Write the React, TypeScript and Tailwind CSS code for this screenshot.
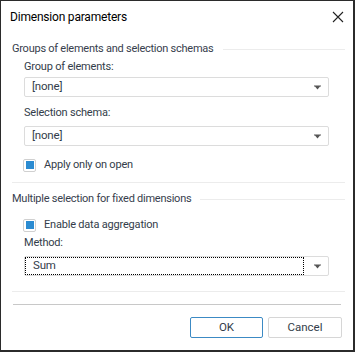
import React from 'react';

const font = { fontFamily: 'Roboto, "Noto Sans", sans-serif' };

function Arrow() {
    return (
        <svg width="7" height="5" viewBox="0 0 7 5" className="shrink-0">
            <path d="M0 0.5h7v1H0z M1 1.5h5L3.5 4.5z" fill="#555" />
        </svg>
    );
}

function Combo({ value, focused }: { value: string; focused?: boolean }) {
    return (
        <div className="ml-[23px] mr-[24px] h-[20px] border border-[#dcdcdc] rounded-[2px] bg-white flex items-center pr-[7px]">
            <div
                className={
                    'flex-1 h-full flex items-center pl-[7px] ' +
                    (focused ? 'border border-dotted border-black mr-[10px]' : 'mr-[10px]')
                }
            >
                <span className="text-[11.5px] tracking-[-0.2px] text-[#333d4a] leading-none">{value}</span>
            </div>
            <Arrow />
        </div>
    );
}

function Check({ label }: { label: string }) {
    return (
        <div className="h-[16px] flex items-center ml-[22px]">
            <div className="w-[13px] h-[13px] border border-[#d0d0d0] rounded-[2px] bg-white flex items-center justify-center">
                <div className="w-[8px] h-[8px] bg-[#2b8bd1]" />
            </div>
            <span className="ml-[8px] text-[11px] tracking-[-0.2px] text-[#333d4a]">{label}</span>
        </div>
    );
}

function SectionHeader({ title }: { title: string }) {
    return (
        <div className="h-[16px] flex items-center pl-[11px] pr-[8px]">
            <span className="text-[11px] tracking-[-0.25px] text-[#37404d] whitespace-nowrap">{title}</span>
            <div className="flex-1 h-px bg-[#ececec] ml-[9px]" />
        </div>
    );
}

function Label({ text }: { text: string }) {
    return (
        <div className="h-[16px] flex items-center ml-[23px]">
            <span className="text-[11px] tracking-[-0.2px] text-[#333d4a]">{text}</span>
        </div>
    );
}

export default function App() {
    return (
        <div
            style={font}
            className="w-[355px] h-[352px] bg-white border-l border-t border-r-2 border-b-2 border-[#2b2b2b] flex flex-col"
        >
            <div className="h-[31px] flex items-center justify-between pl-[9px] pr-[9px]">
                <span className="text-[12px] tracking-[-0.2px] text-black">Dimension parameters</span>
                <svg width="12" height="12" viewBox="0 0 12 12">
                    <path d="M1 1L11 11M11 1L1 11" stroke="#222" strokeWidth="1.1" />
                </svg>
            </div>

            <div className="mt-[9px]">
                <SectionHeader title="Groups of elements and selection schemas" />
            </div>
            <div className="mt-[2px]">
                <Label text="Group of elements:" />
            </div>
            <div className="mt-[2px]">
                <Combo value="[none]" />
            </div>
            <div className="mt-[8px]">
                <Label text="Selection schema:" />
            </div>
            <div className="mt-[5px]">
                <Combo value="[none]" />
            </div>
            <div className="mt-[11px]">
                <Check label="Apply only on open" />
            </div>
            <div className="mt-[9px] ml-[11px] mr-[8px] h-px bg-[#ececec]" />

            <div className="mt-[8px]">
                <SectionHeader title="Multiple selection for fixed dimensions" />
            </div>
            <div className="mt-[10px]">
                <Check label="Enable data aggregation" />
            </div>
            <div className="mt-[2px]">
                <Label text="Method:" />
            </div>
            <div className="mt-[5px]">
                <Combo value="Sum" focused />
            </div>

            <div className="mt-[15px] ml-[11px] mr-[8px] h-px bg-[#ececec]" />
            <div className="mt-[12px] ml-[12px] mr-[12px] h-px bg-[#c8c8c8]" />

            <div className="mt-[12px] flex justify-end gap-[5px] pr-[11px]">
                <button className="w-[73px] h-[21px] border border-[#3c8ac4] rounded-[2px] bg-white text-[11.5px] text-[#333d4a] flex items-center justify-center">
                    OK
                </button>
                <button className="w-[74px] h-[21px] border border-[#d6d6d6] rounded-[2px] bg-white text-[11.5px] text-[#333d4a] flex items-center justify-center">
                    Cancel
                </button>
            </div>
        </div>
    );
}
